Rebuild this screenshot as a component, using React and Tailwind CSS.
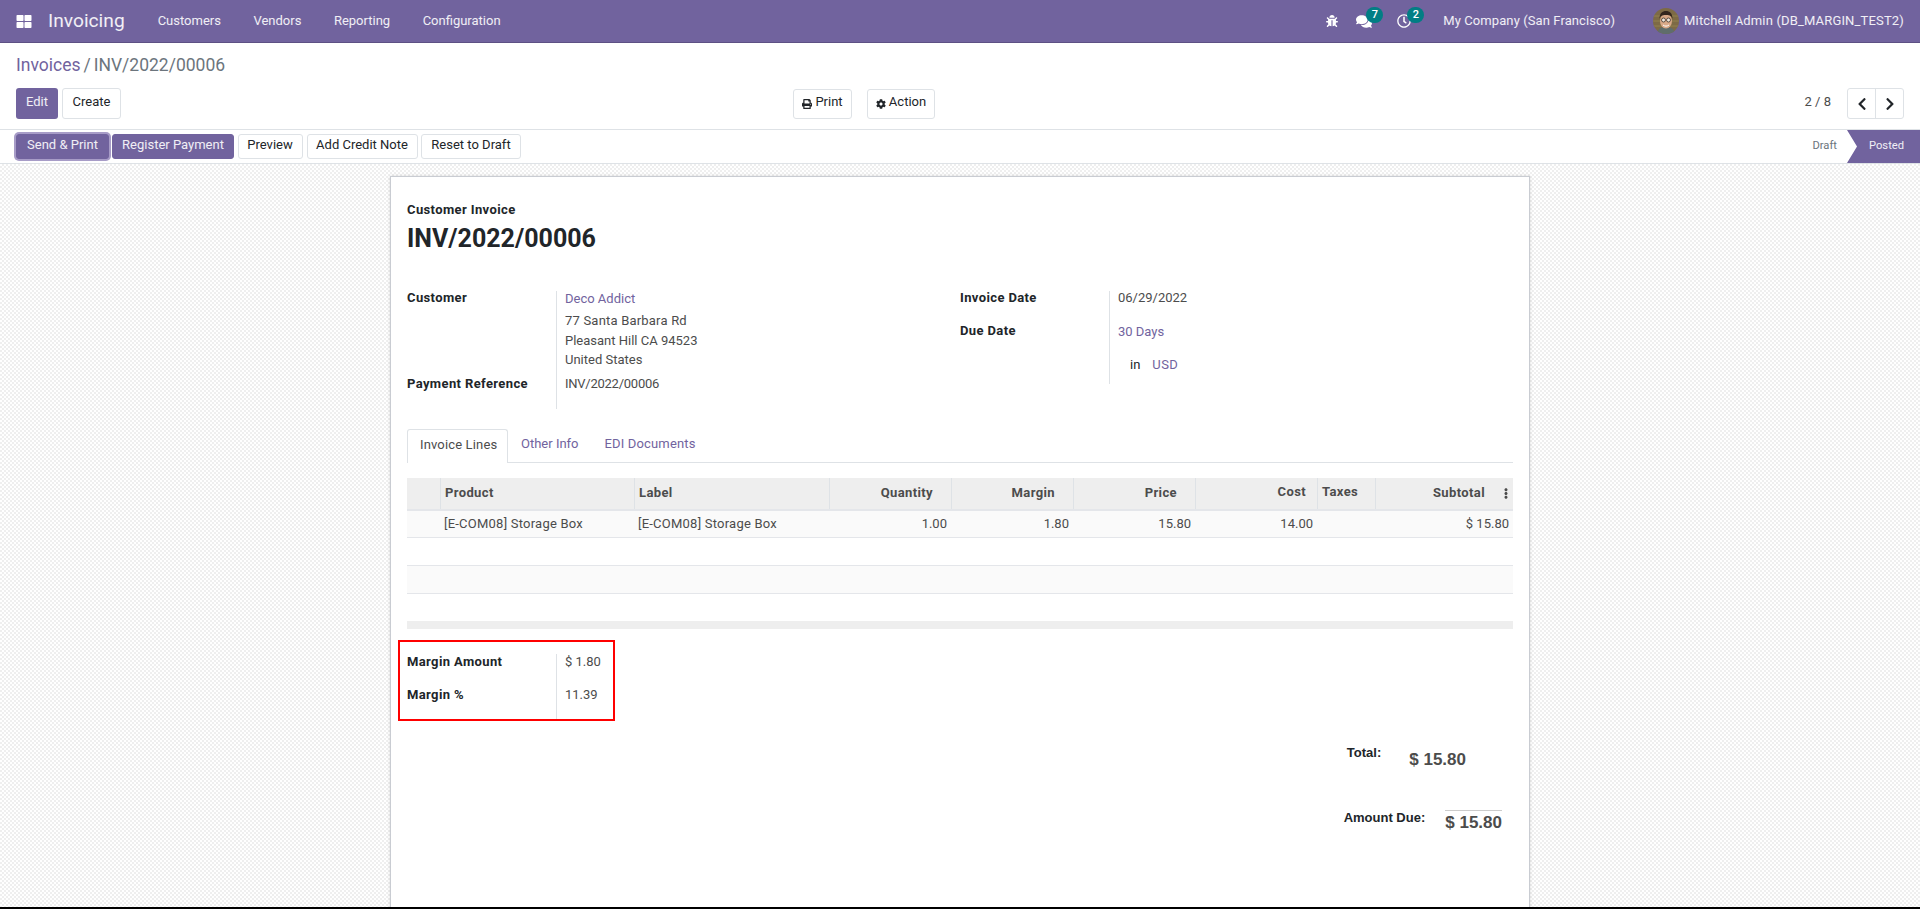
import React from 'react';
import { FaThLarge, FaBug, FaComments, FaRegClock, FaPrint, FaCog, FaChevronLeft, FaChevronRight, FaEllipsisV } from 'react-icons/fa';

const gridCols = 'grid grid-cols-[33px_194px_195px_122px_122px_122px_122px_58px_138px]';

const Avatar = () => (
  <svg width="26" height="26" viewBox="0 0 26 26" className="rounded-full">
    <rect width="26" height="26" fill="#7d6a45" />
    <path d="M0 8h26M0 13h26M0 18h26" stroke="#93814f" strokeWidth="1" />
    <path d="M4 26c1-6 4-7 9-7s8 1 9 7z" fill="#5f6d6b" />
    <ellipse cx="13" cy="13" rx="6" ry="7.5" fill="#d9a988" />
    <path d="M6.500 11c0-6 3-8 6.500-8s6.500 2 6.500 8c-1-3-2-4-6.500-4s-5.500 1-6.500 4z" fill="#33261d" />
    <circle cx="10.500" cy="12" r="2" fill="#efe6da" stroke="#2d2620" strokeWidth=".7" />
    <circle cx="15.500" cy="12" r="2" fill="#efe6da" stroke="#2d2620" strokeWidth=".7" />
    <path d="M10 17c2 1.500 4 1.500 6 0" stroke="#fff" strokeWidth="1" fill="none" />
  </svg>
);

const NavIcon = ({ className, badge, children }) => (
  <div className={`relative flex items-center ${className}`}>
    {children}
    <span className="absolute -top-[7px] left-[10px] min-w-[17px] h-[16px] rounded-full bg-[#017e84] text-white text-[11px] font-medium leading-[16px] text-center">
      {badge}
    </span>
  </div>
);

const Navbar = () => (
  <nav className="h-[43px] shrink-0 flex items-center bg-[#71639e] border-b border-[#5d5084] text-white/90 pl-4 pr-4">
    <FaThLarge className="text-white w-[16px] h-[15px]" />
    <span className="ml-4 text-[19.2px] leading-none">Invoicing</span>
    <div className="ml-[33px] flex gap-[32.5px]">
      <a>Customers</a>
      <a>Vendors</a>
      <a>Reporting</a>
      <a>Configuration</a>
    </div>
    <div className="ml-auto flex items-center">
      <FaBug className="text-white w-[12px] h-[12px]" />
      <NavIcon className="ml-[18px]" badge="7">
        <FaComments className="text-white w-[16px] h-[15px]" />
      </NavIcon>
      <NavIcon className="ml-[25px]" badge="2">
        <FaRegClock className="text-white w-[14px] h-[14px]" />
      </NavIcon>
      <span className="ml-[32px] tracking-[0.09px]">My Company (San Francisco)</span>
      <div className="ml-[38px]"><Avatar /></div>
      <span className="ml-[5px] tracking-[0.16px]">Mitchell Admin (DB_MARGIN_TEST2)</span>
    </div>
  </nav>
);

const whiteBtn = 'h-[25px] pb-[3px] rounded-[3px] border border-[#dee2e6] bg-white text-[#212529]';
const purpleBtn = 'h-[25px] pb-[3px] rounded-[3px] border border-[#71639e] bg-[#71639e] text-white/90';

const ControlPanel = () => (
  <div className="shrink-0 bg-white border-b border-[#dee2e6] px-4 pt-[10px] pb-[10px]">
    <div className="text-[17.5px] leading-[24px] text-[#6c757d]">
      <a className="text-[#71639e]">Invoices</a><span className="mx-[3px]">/</span>INV/2022/00006
    </div>
    <div className="mt-[11px] flex items-center h-[31px]">
      <div className="w-[777px] flex gap-[4px]">
        <button className="h-[31px] w-[42px] pb-[4px] rounded-[3px] bg-[#71639e] text-white/90">Edit</button>
        <button className="h-[31px] w-[59px] pb-[4px] rounded-[3px] border border-[#dee2e6] bg-white text-[#212529]">Create</button>
      </div>
      <div className="flex gap-[15px]">
        <button className="h-[30px] w-[59px] pb-[3px] rounded-[3px] border border-[#dee2e6] bg-white text-[#212529] flex items-center justify-center gap-[3px]">
          <FaPrint className="w-[10px] h-[10px] mt-[3px]" />Print
        </button>
        <button className="h-[30px] w-[68px] pb-[3px] rounded-[3px] border border-[#dee2e6] bg-white text-[#212529] flex items-center justify-center gap-[3px]">
          <FaCog className="w-[10px] h-[10px] mt-[3px]" />Action
        </button>
      </div>
      <span className="ml-auto pb-[4px] text-[#4c4c4c]">2 / 8</span>
      <div className="ml-[16px] flex h-[31px] w-[57px] rounded-[3px] border border-[#dee2e6] text-[#212529]">
        <button className="flex-1 flex items-center justify-center border-r border-[#dee2e6]"><FaChevronLeft className="w-[12px] h-[14px]" /></button>
        <button className="flex-1 flex items-center justify-center"><FaChevronRight className="w-[12px] h-[14px]" /></button>
      </div>
    </div>
  </div>
);

const StatusBar = () => (
  <div className="shrink-0 h-[34px] bg-white border-b border-[#dee2e6] flex items-start">
    <div className="pl-4 pt-[4px] flex">
      <button className={`${purpleBtn} w-[93px] ring-2 ring-[#a79cc7]`}>Send &amp; Print</button>
      <button className={`${purpleBtn} ml-[3px] w-[122px]`}>Register Payment</button>
      <button className={`${whiteBtn} ml-[3.5px] w-[65px]`}>Preview</button>
      <button className={`${whiteBtn} ml-[4px] w-[111px]`}>Add Credit Note</button>
      <button className={`${whiteBtn} ml-[3.5px] w-[100px]`}>Reset to Draft</button>
    </div>
    <span className="ml-auto h-[33px] leading-[31px] text-[11.2px] text-[#6c757d]">Draft</span>
    <div className="ml-[10px] h-[33px] w-[73px] bg-[#71639e] text-white/90 text-[11.2px] leading-[31px] pl-[22px] [clip-path:polygon(0_0,100%_0,100%_100%,0_100%,10px_50%)]">
      Posted
    </div>
  </div>
);

const Label = ({ className = '', children }) => (
  <div className={`font-bold tracking-[0.38px] text-[#212529] leading-[14px] ${className}`}>{children}</div>
);

const Value = ({ className = '', children }) => (
  <div className={`border-l border-[#dee2e6] pl-2 ${className}`}>{children}</div>
);

const HeaderCell = ({ right, className = '', children }) => (
  <div className={`h-[31px] flex items-center pr-[11px] pl-[4px] pb-[2px] font-bold tracking-[0.38px] text-[#4c4c4c] ${right ? 'justify-end' : ''} ${className}`}>
    {children}
  </div>
);

const InvoiceTable = () => (
  <div className="mt-[15px] text-[#4c4c4c]">
    <div className={`${gridCols} bg-[#eeeeee] border-b-2 border-[#e4e6ea]`}>
      <HeaderCell />
      <HeaderCell className="border-l border-[#dee2e6]">Product</HeaderCell>
      <HeaderCell className="border-l border-[#dee2e6]">Label</HeaderCell>
      <HeaderCell right className="border-l border-[#dee2e6] pr-[18px]">Quantity</HeaderCell>
      <HeaderCell right className="border-l border-[#dee2e6] pr-[18px]">Margin</HeaderCell>
      <HeaderCell right className="border-l border-[#dee2e6] pr-[18px]">Price</HeaderCell>
      <HeaderCell right className="border-l border-[#dee2e6] pr-[4px] pb-[3px]">Cost</HeaderCell>
      <HeaderCell className="border-l border-[#dee2e6] pb-[3px]">Taxes</HeaderCell>
      <div className="h-[31px] relative flex items-center justify-end pr-[28px] pb-[2px] font-bold tracking-[0.38px] border-l border-[#dee2e6]">
        Subtotal
        <FaEllipsisV className="absolute right-[1px] top-[10px] w-[12px] h-[11px] text-[#4c4c4c]" />
      </div>
    </div>
    <div className={`${gridCols} h-[27px] items-center bg-[#fafafa] border-b border-[#e4e6ea]`}>
      <div />
      <div className="pl-[4px] tracking-[0.23px]">[E-COM08] Storage Box</div>
      <div className="pl-[4px] tracking-[0.23px]">[E-COM08] Storage Box</div>
      <div className="text-right pr-[4px]">1.00</div>
      <div className="text-right pr-[4px]">1.80</div>
      <div className="text-right pr-[4px]">15.80</div>
      <div className="text-right pr-[4px]">14.00</div>
      <div />
      <div className="text-right pr-[4px]">$ 15.80</div>
    </div>
    <div className="h-[28px] border-b border-[#e4e6ea]" />
    <div className="h-[28px] bg-[#fafafa] border-b border-[#e4e6ea]" />
    <div className="h-[27px]" />
    <div className="h-[8px] bg-[#eeeeee]" />
  </div>
);

const Sheet = () => (
  <div className="mx-auto w-[1140px] h-[900px] mt-[12px] bg-white border border-[#c9ccd2] shadow-[0_0_3px_rgba(0,0,0,0.15)] px-4 pt-[23px] text-[#4c4c4c]">
    <div className="font-bold tracking-[0.38px] text-[#212529] leading-[20px]">Customer Invoice</div>
    <h1 className="mt-[1px] text-[25px] leading-[36px] font-bold text-[#212529]">INV/2022/00006</h1>

    <div className="mt-[34px] grid grid-cols-2 items-start">
      <div className="grid grid-cols-[149px_1fr]">
        <Label>Customer</Label>
        <Value>
          <a className="block leading-[16px] text-[#71639e]">Deco Addict</a>
          <div className="mt-[4px] leading-[19.5px]">
            <span className="tracking-[0.2px]">77 Santa Barbara Rd</span><br />Pleasant Hill CA 94523<br />United States
          </div>
        </Value>
        <Label className="pt-[7px]">Payment Reference</Label>
        <Value className="pt-[6.5px] pb-[17px] leading-[16px] tracking-[-0.25px]">INV/2022/00006</Value>
      </div>
      <div className="grid grid-cols-[149px_1fr]">
        <Label>Invoice Date</Label>
        <Value className="h-[33px] leading-[14px]">06/29/2022</Value>
        <Label>Due Date</Label>
        <Value className="h-[33px] leading-[16px]"><a className="text-[#71639e]">30 Days</a></Value>
        <div />
        <Value className="h-[27px] leading-[16px]">
          <span className="ml-3 text-[#212529]">in</span>
          <a className="ml-[12px] tracking-[0.4px] text-[#71639e]">USD</a>
        </Value>
      </div>
    </div>

    <div className="mt-[20px] flex border-b border-[#dee2e6] h-[34px]">
      <a className="h-[34px] w-[101px] pl-[12px] border border-b-0 border-[#dee2e6] rounded-t-[3px] bg-white leading-[29px] tracking-[0.15px]">Invoice Lines</a>
      <a className="px-[13px] leading-[29px] text-[#71639e]">Other Info</a>
      <a className="px-[13px] leading-[29px] text-[#71639e] tracking-[0.15px]">EDI Documents</a>
    </div>

    <InvoiceTable />

    <div className="mt-[11px] -ml-[9px] w-[217px] h-[81px] border-2 border-[#ff0000] pl-[7px] pt-[12px]">
      <div className="grid grid-cols-[149px_1fr] h-[65px]">
        <Label className="pt-[1px]">Margin Amount</Label>
        <Value className="h-[33px] leading-[16px]">$ 1.80</Value>
        <Label className="pt-[1px]">Margin %</Label>
        <Value className="h-[32px] leading-[16px]">11.39</Value>
      </div>
    </div>

    <div className="[font-family:Liberation_Sans,sans-serif] font-bold">
      <div className="mt-[24px] flex justify-end items-start gap-[28px] pr-[47px]">
        <span className="leading-[16px] text-[#212529]">Total:</span>
        <span className="mt-[5px] text-[17px] leading-[20px]">$ 15.80</span>
      </div>
      <div className="mt-[40px] flex justify-end items-start gap-[20px] pr-[11px]">
        <span className="leading-[16px] text-[#212529]">Amount Due:</span>
        <span className="border-t border-[#cccccc] text-[17px] leading-[24px]">$ 15.80</span>
      </div>
    </div>
  </div>
);

export default function App() {
  return (
    <div className="h-[909px] flex flex-col overflow-hidden [font-family:Roboto,sans-serif] text-[13px] bg-white">
      <Navbar />
      <ControlPanel />
      <StatusBar />
      <main className="flex-1 overflow-hidden bg-[repeating-conic-gradient(#efefef_0_25%,#ffffff_0_50%)] bg-[length:4px_4px]">
        <Sheet />
      </main>
      <div className="h-[2px] shrink-0 bg-black" />
    </div>
  );
}
